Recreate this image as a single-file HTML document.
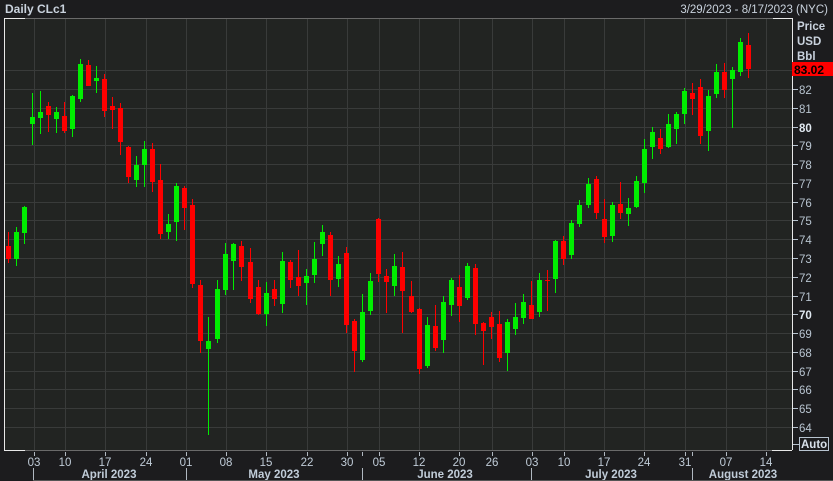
<!DOCTYPE html>
<html><head><meta charset="utf-8"><style>
html,body{margin:0;padding:0;background:#1c1c1e;width:833px;height:481px;overflow:hidden}
svg{display:block;font-family:"Liberation Sans",sans-serif}
</style></head><body>
<svg id="s" width="833" height="481" xmlns="http://www.w3.org/2000/svg">
<rect x="0" y="0" width="833" height="481" fill="#1c1c1e"/>
<rect x="4" y="18" width="788" height="432" fill="#222422"/>
<g id="grid" stroke="#393b3a" stroke-width="1"></g>
<g id="c"></g>
<line x1="4.5" y1="18" x2="4.5" y2="450" stroke="#e8e8e8"/>
<line x1="4" y1="18.5" x2="25" y2="18.5" stroke="#e8e8e8"/>
<line x1="25" y1="18.5" x2="773" y2="18.5" stroke="#6a6a6a"/>
<line x1="773" y1="18.5" x2="792" y2="18.5" stroke="#e8e8e8"/>
<line x1="4" y1="450.5" x2="25" y2="450.5" stroke="#e8e8e8"/>
<line x1="25" y1="450.5" x2="772" y2="450.5" stroke="#6a6a6a"/>
<line x1="772" y1="450.5" x2="792" y2="450.5" stroke="#e8e8e8"/>
<line x1="792.5" y1="18" x2="792.5" y2="450" stroke="#e8e8e8"/>
<text x="5" y="13" fill="#c9d2dd" font-size="12" font-weight="bold">Daily CLc1</text>
<text x="828" y="13" fill="#c9d2dd" font-size="11.5" text-anchor="end">3/29/2023 - 8/17/2023 (NYC)</text>
<text x="797" y="30" fill="#c9d2dd" font-size="11.5" font-weight="bold">Price</text>
<text x="797" y="45" fill="#c9d2dd" font-size="11.5" font-weight="bold">USD</text>
<text x="797" y="60" fill="#c9d2dd" font-size="11.5" font-weight="bold">Bbl</text>
<rect x="792" y="62" width="41" height="14" fill="#ff0000"/>
<text x="794" y="74" fill="#000" font-size="12" font-weight="bold">83.02</text>
<g id="ax" fill="#b8c4d0" font-size="11.5"></g>
<rect x="799.5" y="437.5" width="29" height="13" fill="none" stroke="#b8c4d0"/>
<text x="801" y="448" fill="#d8e0ea" font-size="11.5" font-weight="bold">Auto</text>
<line x1="793" y1="444.5" x2="799" y2="444.5" stroke="#b8c4d0"/>
<g id="bx" fill="#c0ccd8" font-size="11.5"></g>
<g fill="#c0ccd8" font-size="11.5" font-weight="bold" text-anchor="middle">
<text x="109" y="478">April 2023</text>
<text x="274" y="478">May 2023</text>
<text x="445" y="478">June 2023</text>
<text x="611" y="478">July 2023</text>
<text x="743" y="478">August 2023</text>
</g>
<g stroke="#b0b8c0">
<line x1="33.5" y1="468" x2="33.5" y2="481"/>
<line x1="186.5" y1="468" x2="186.5" y2="481"/>
<line x1="362.5" y1="468" x2="362.5" y2="481"/>
<line x1="531.5" y1="468" x2="531.5" y2="481"/>
<line x1="692.5" y1="468" x2="692.5" y2="481"/>
<line x1="362.5" y1="452" x2="362.5" y2="456"/>
<line x1="692.5" y1="452" x2="692.5" y2="456"/>
</g>
<line x1="33" y1="480.5" x2="833" y2="480.5" stroke="#555"/>
</svg>
<script>
var NS="http://www.w3.org/2000/svg";
function el(p,t,a,txt){var e=document.createElementNS(NS,t);for(var k in a)e.setAttribute(k,a[k]);if(txt)e.textContent=txt;document.getElementById(p).appendChild(e);}
var Y=function(p){return 89+(82-p)*18.78;};
for(var p=64;p<=83;p++){var y=Math.round(Y(p))+0.5;el("grid","line",{x1:4,y1:y,x2:792,y2:y});
 if(p<=82){el("ax","line",{x1:793,y1:y,x2:798,y2:y,stroke:"#b8c4d0"});
 el("ax","text",{x:799,y:y+4.5,"font-weight":(p==80||p==70)?"bold":"normal",fill:(p==80||p==70)?"#e0e8f0":"#b8c4d0"},String(p));}}
var days=[[34,"03"],[65,"10"],[105,"17"],[146,"24"],[186,"01"],[226,"08"],[266,"15"],[307,"22"],[347,"30"],[379,"05"],[419,"12"],[459,"20"],[492,"26"],[532,"03"],[564,"10"],[604,"17"],[644,"24"],[685,"31"],[726,"07"],[766,"14"]];
days.forEach(function(d){var x=d[0]+0.5;el("grid","line",{x1:x,y1:18,x2:x,y2:450});
 el("bx","line",{x1:x,y1:452,x2:x,y2:456,stroke:"#b0b8c0"});
 el("bx","text",{x:d[0],y:466,"text-anchor":"middle"},d[1]);});
var G="#00ee00",R="#ff0000";
var c=[[8,232,263,246,259,R],[16,227,266,232,259,G],[24,206,244,207,233,G],
[32,93,145,117,124,G],[40,91,134,112,118,G],[48,102,132,106,115,R],[56,107,133,112,119,G],[64,102,133,116,131,R],
[72,95,137,96,129,G],[80,59,102,64,99,G],[88,60,86,65,86,R],[96,66,93,78,81,G],[104,74,117,79,111,R],
[112,97,129,106,110,R],[120,103,155,108,142,R],[128,146,183,147,177,R],[136,156,187,165,180,G],[144,141,187,149,165,G],
[152,143,192,149,182,R],[160,164,239,180,234,R],[168,214,239,224,232,G],[176,183,241,186,222,G],[184,186,230,188,208,R],
[192,199,288,205,284,R],[200,280,353,285,341,R],[208,317,435,341,349,G],[217,280,343,289,339,G],[225,243,295,254,290,G],
[233,243,290,244,261,G],[241,241,281,246,267,R],[250,248,303,262,299,R],[258,280,315,287,314,R],[266,282,326,293,314,G],
[274,280,306,289,299,R],[282,252,313,261,304,G],[290,260,288,262,280,R],[298,250,296,277,286,R],[306,269,305,276,283,G],
[314,242,283,259,275,G],[322,225,256,232,244,G],[330,232,296,235,280,R],[338,256,287,264,279,G],[346,247,333,253,325,R],
[354,319,372,321,351,R],[362,294,362,312,360,G],[370,273,315,281,311,G],[378,218,282,219,274,R],[386,269,313,276,282,R],
[394,254,296,266,286,G],[402,252,333,267,291,R],[411,281,313,296,312,R],[419,308,374,309,369,R],[427,317,368,325,366,G],
[435,305,351,326,348,R],[443,296,353,302,340,G],[451,278,316,280,305,G],[459,275,322,287,306,R],[467,263,300,266,298,G],
[475,264,335,268,324,R],[483,322,365,323,331,R],[491,312,339,317,327,R],[499,311,362,324,358,R],[507,319,371,322,353,G],
[515,303,335,317,329,G],[523,294,324,302,318,G],[531,281,319,305,319,R],[539,273,317,280,312,G],[547,270,311,280,281,R],
[555,240,293,241,279,G],[563,236,265,241,259,R],[571,220,259,223,255,G],[579,200,227,205,224,G],[588,178,208,184,205,G],
[596,176,219,179,213,R],[604,199,243,219,237,R],[612,202,242,205,236,G],[620,182,219,204,213,R],[628,198,226,208,214,G],
[636,176,208,181,207,G],[644,139,193,149,183,G],[652,127,159,132,147,G],[660,129,154,138,149,R],[668,114,148,124,147,G],
[676,112,144,114,129,G],[684,88,124,91,114,G],[692,83,115,93,99,R],[700,79,144,87,136,R],[708,90,151,96,131,G],
[716,64,98,72,94,G],[724,63,98,72,90,R],[732,67,128,70,79,G],[740,38,76,42,72,G],[748,33,78,45,69,R]];
c.forEach(function(k){var x=k[0];
 el("c","rect",{x:x,y:k[1],width:1,height:k[2]-k[1],fill:k[5]});
 el("c","rect",{x:x-2,y:k[3],width:5,height:Math.max(1,k[4]-k[3]),fill:k[5]});});
</script>
</body></html>
